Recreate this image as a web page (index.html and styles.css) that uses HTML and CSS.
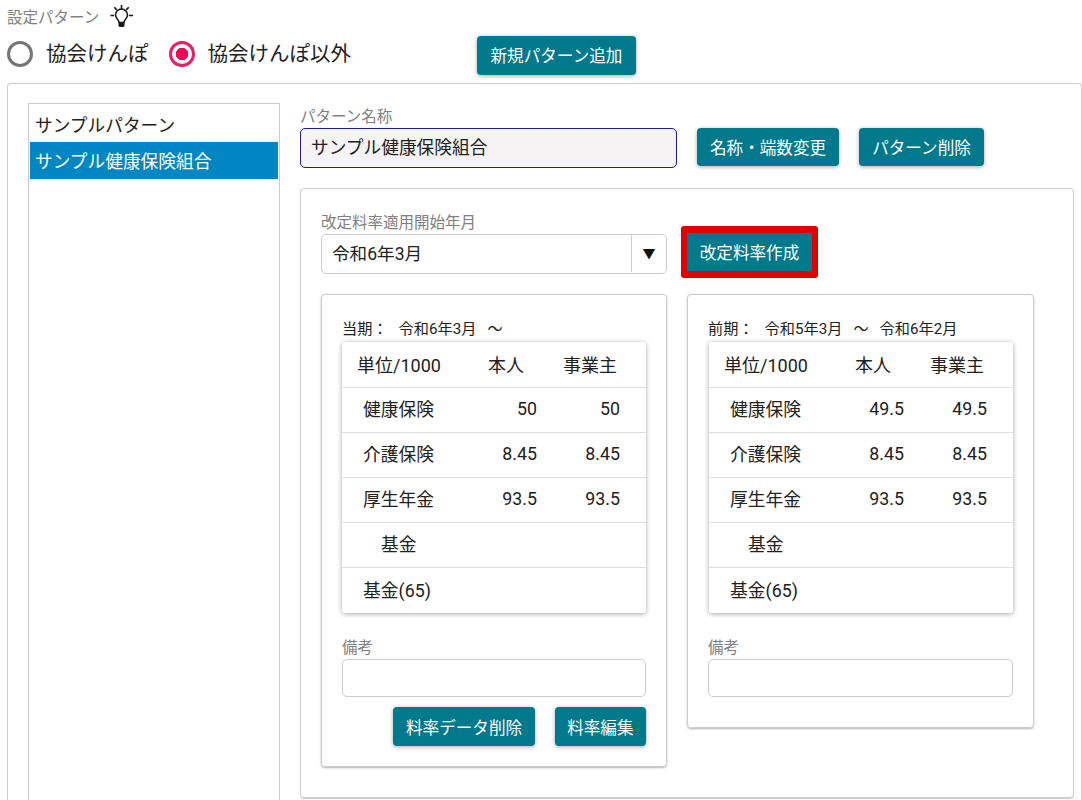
FILE: index.html
```html
<!DOCTYPE html>
<html lang="ja">
<head>
    <meta charset="UTF-8">
    <title>設定パターン</title>
    <link rel="stylesheet" href="styles.css">
</head>
<body>
    <div class="title-row">
        <span class="caption">設定パターン</span>
        <svg class="bulb" width="24" height="24" viewBox="0 0 24 24" fill="none" stroke="#1a1a1a" stroke-width="1.6">
            <path d="M11.500 1v4M4.300 3.200l2.400 2.700M18.700 3.200l-2.400 2.700M0.500 11.500h3.500M19 11.500h4"/>
            <path d="M9 18.500c0-3-3.500-3.500-3.500-7.500a6 6 0 0 1 12 0c0 4-3.500 4.500-3.500 7.500z"/>
            <path d="M8.500 19h6v3l-1 1h-4l-1-1z" fill="#1a1a1a" stroke="none"/>
        </svg>
    </div>
    <div class="radio-row">
        <span class="radio"></span><span class="radio-label">協会けんぽ</span>
        <span class="radio checked"></span><span class="radio-label">協会けんぽ以外</span>
        <button class="btn add-btn">新規パターン追加</button>
    </div>

    <div class="outer">
        <div class="pattern-list">
            <div class="pattern">サンプルパターン</div>
            <div class="pattern selected">サンプル健康保険組合</div>
        </div>
        <div class="main">
            <div class="name-row">
                <div class="name-field">
                    <div class="caption">パターン名称</div>
                    <div class="name-input">サンプル健康保険組合</div>
                </div>
                <button class="btn">名称・端数変更</button>
                <button class="btn">パターン削除</button>
            </div>

            <div class="rates">
                <div class="date-row">
                    <div class="date-field">
                        <div class="caption">改定料率適用開始年月</div>
                        <div class="select">
                            <span class="select-value">令和6年3月</span>
                            <span class="select-arrow">▼</span>
                        </div>
                    </div>
                    <div class="highlight"><button class="btn">改定料率作成</button></div>
                </div>

                <div class="cards">
                    <div class="card">
                        <div class="period"><span>当期：</span><span>令和6年3月</span><span>～</span></div>
                        <table class="rate-table">
                            <tr><th>単位/1000</th><th class="c-self">本人</th><th class="c-owner">事業主</th></tr>
                            <tr><td class="n1">健康保険</td><td class="num">50</td><td class="num">50</td></tr>
                            <tr><td class="n1">介護保険</td><td class="num">8.45</td><td class="num">8.45</td></tr>
                            <tr><td class="n1">厚生年金</td><td class="num">93.5</td><td class="num">93.5</td></tr>
                            <tr><td class="n2">基金</td><td></td><td></td></tr>
                            <tr class="last"><td class="n1">基金(65)</td><td></td><td></td></tr>
                        </table>
                        <div class="caption memo-label">備考</div>
                        <div class="memo"></div>
                        <div class="card-buttons">
                            <button class="btn">料率データ削除</button>
                            <button class="btn">料率編集</button>
                        </div>
                    </div>
                    <div class="card">
                        <div class="period"><span>前期：</span><span>令和5年3月</span><span>～</span><span>令和6年2月</span></div>
                        <table class="rate-table">
                            <tr><th>単位/1000</th><th class="c-self">本人</th><th class="c-owner">事業主</th></tr>
                            <tr><td class="n1">健康保険</td><td class="num">49.5</td><td class="num">49.5</td></tr>
                            <tr><td class="n1">介護保険</td><td class="num">8.45</td><td class="num">8.45</td></tr>
                            <tr><td class="n1">厚生年金</td><td class="num">93.5</td><td class="num">93.5</td></tr>
                            <tr><td class="n2">基金</td><td></td><td></td></tr>
                            <tr class="last"><td class="n1">基金(65)</td><td></td><td></td></tr>
                        </table>
                        <div class="caption memo-label">備考</div>
                        <div class="memo"></div>
                    </div>
                </div>
            </div>
        </div>
    </div>
</body>
</html>
```

FILE: styles.css
```css
html, body {
    height: 800px;
    overflow: hidden;
}

body {
    margin: 0;
    background: #fff;
    color: #212121;
    font-family: Roboto, "Noto Sans CJK JP", sans-serif;
    font-size: 16px;
}

.caption {
    height: 16px;
    color: #808080;
    font-size: 15.500px;
    line-height: 18px;
}

.title-row {
    display: flex;
    align-items: center;
    gap: 11px;
    height: 29px;
    padding: 2px 0 0 7px;
    box-sizing: border-box;
}

.title-row .caption {
    margin-top: 2px;
}

.radio-row {
    display: flex;
    align-items: center;
    height: 50px;
    padding-left: 7px;
}

.radio {
    width: 26px;
    height: 26px;
    box-sizing: border-box;
    border: 3px solid #757575;
    border-radius: 50%;
    flex: none;
}

.radio.checked {
    border-color: #e91e63;
    background: radial-gradient(circle, #f50057 0, #f50057 6px, #fff 6.500px);
}

.radio-label {
    font-size: 20.500px;
    line-height: 28px;
    margin: 0 20px 0 13px;
}

.btn {
    height: 38px;
    padding: 0 13px;
    border: none;
    border-radius: 4px;
    background: #00798c;
    color: #fff;
    font-family: inherit;
    font-size: 16.600px;
    white-space: nowrap;
    box-shadow: 0 1px 4px rgba(0,0,0,0.35);
}

.add-btn {
    height: 39px;
    margin: 2px 0 0 106px;
    padding: 0 13.500px;
}

.outer {
    display: flex;
    gap: 20px;
    margin: 4px 0 0 7px;
    padding: 19px 7px 0 20px;
    border: 1px solid #ccc;
    border-bottom: none;
    border-radius: 4px 4px 0 0;
    height: 697px;
}

.pattern-list {
    width: 252px;
    height: 697px;
    flex: none;
    border: 1px solid #ccc;
    border-bottom: none;
    padding: 1px;
    box-sizing: border-box;
    font-size: 17.700px;
}

.pattern {
    height: 37px;
    line-height: 41px;
    padding-left: 5px;
}

.pattern:first-child {
    line-height: 43px;
}

.pattern.selected {
    background: #0087c3;
    color: #fff;
}

.main {
    flex: 1;
}

.name-row {
    display: flex;
    align-items: flex-end;
    gap: 20px;
    margin-top: 5px;
}

.name-input {
    width: 377px;
    height: 40px;
    box-sizing: border-box;
    border: 1px solid #1a1a9c;
    border-radius: 5px;
    background: #f5f3f3;
    padding-left: 10px;
    font-size: 17.700px;
    line-height: 39px;
    margin-top: 4px;
}

.name-row .btn {
    margin-bottom: 2px;
}

.rates {
    margin-top: 20px;
    height: 610px;
    padding: 25px 20px 0;
    box-sizing: border-box;
    border: 1px solid #ccc;
    border-radius: 4px;
    box-shadow: 0 1px 1px rgba(0,0,0,0.2);
}

.date-row {
    display: flex;
    align-items: flex-end;
    gap: 14px;
}

.select {
    display: flex;
    width: 346px;
    height: 40px;
    box-sizing: border-box;
    margin-top: 4px;
    border: 1px solid #ccc;
    border-radius: 5px;
    line-height: 38px;
    font-size: 17.600px;
}

.select-value {
    flex: 1;
    padding-left: 10px;
}

.select-arrow {
    width: 34px;
    margin: 0 0 1px;
    border-left: 1px solid #ccc;
    text-align: center;
    color: #111;
    font-size: 13px;
}

.highlight {
    padding: 7px 6px;
    background: #e00000;
    border-radius: 3px;
    margin-bottom: -4px;
    height: 52px;
    box-sizing: border-box;
}

.highlight .btn {
    display: block;
    width: 125px;
    padding: 0;
    border-radius: 0;
    box-shadow: none;
}

.cards {
    display: flex;
    align-items: flex-start;
    gap: 20px;
    margin-top: 20px;
}

.card {
    width: 346px;
    box-sizing: border-box;
    padding: 24px 20px 20px;
    border: 1px solid #ccc;
    border-radius: 4px;
    box-shadow: 0 1px 2px rgba(0,0,0,0.3);
}

.card + .card {
    width: 347px;
    padding-bottom: 30px;
}

.card + .card .rate-table {
    margin-left: 1px;
}

.period {
    display: flex;
    gap: 11px;
    font-size: 15.200px;
    line-height: 20px;
    margin-bottom: 3px;
}

.rate-table {
    width: 304px;
    border-collapse: collapse;
    table-layout: fixed;
    border-radius: 3px;
    box-shadow: 0 1px 5px rgba(0,0,0,0.35);
    font-size: 17.800px;
}

.rate-table tr {
    height: 45px;
}

.rate-table tr.last {
    height: 46px;
}

.rate-table tr + tr {
    border-top: 1px solid #e0e0e0;
}

.rate-table td {
    padding-bottom: 4px;
}

.rate-table th {
    padding-bottom: 2px;
    font-size: 18px;
    font-weight: normal;
    text-align: left;
    padding-left: 15px;
}

.rate-table th:first-child {
    width: 146px;
    box-sizing: border-box;
}

.rate-table th.c-self {
    width: 74px;
    padding-left: 0;
}

.rate-table th.c-owner {
    padding-left: 0;
}

.n1 {
    padding-left: 21px;
}

.n2 {
    padding-left: 39px;
}

.num {
    text-align: right;
    padding-right: 26px;
}

.memo-label {
    margin-top: 26px;
}

.memo {
    height: 38px;
    box-sizing: border-box;
    margin-top: 4px;
    border: 1px solid #ccc;
    border-radius: 5px;
}

.card-buttons {
    display: flex;
    justify-content: flex-end;
    gap: 20px;
    margin-top: 10px;
}

.card-buttons .btn {
    height: 39px;
    padding: 0 12.500px;
}
```
